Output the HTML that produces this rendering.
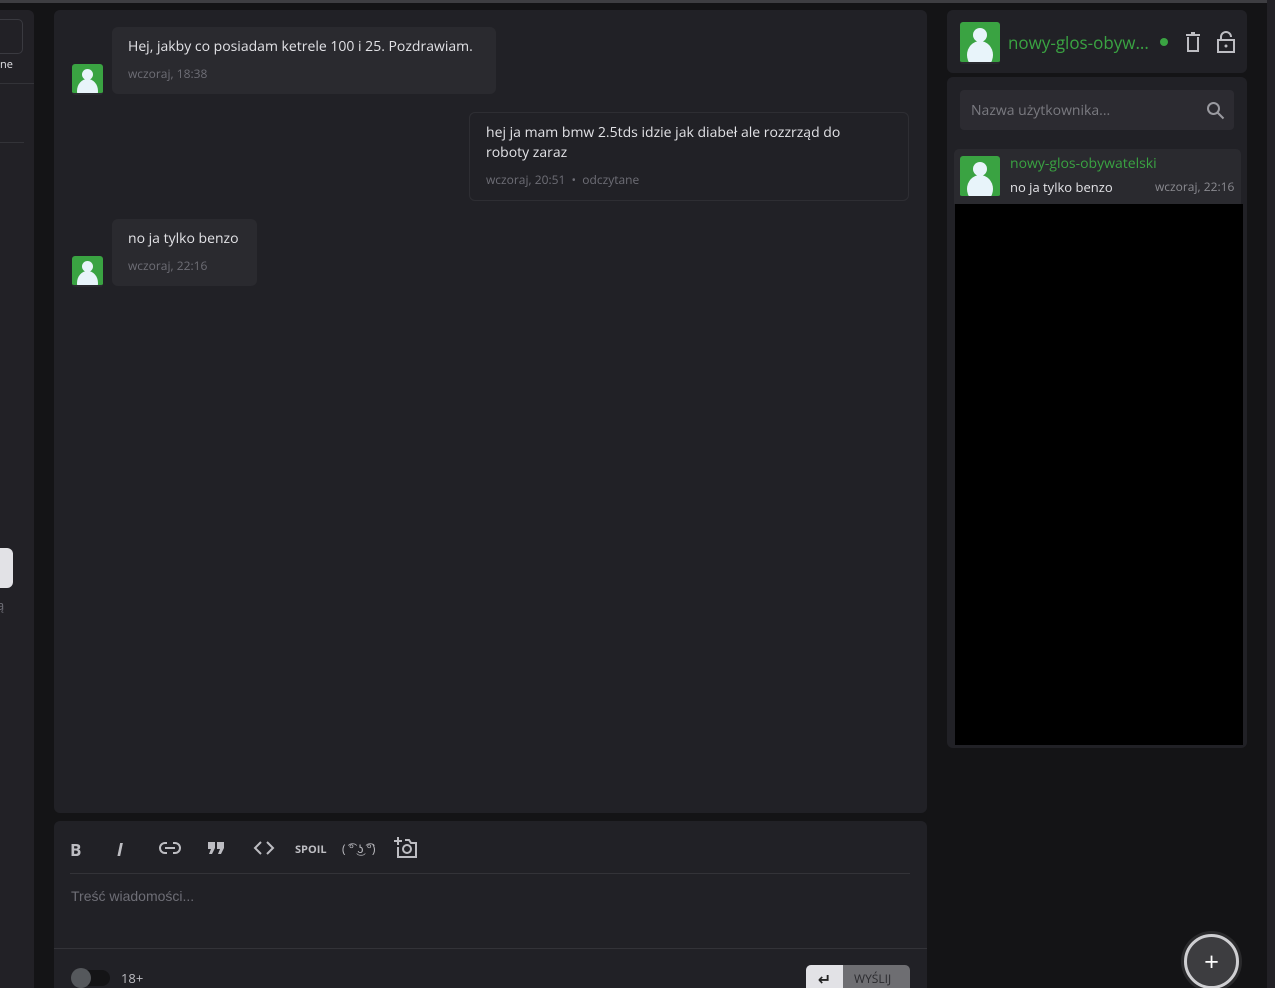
<!DOCTYPE html>
<html><head><meta charset="utf-8"><style>
*{box-sizing:border-box;margin:0;padding:0}
html{width:1275px;height:988px;overflow:hidden}
body{width:1275px;height:988px;background:#141416;position:relative;overflow:hidden;font-family:"Open Sans","Liberation Sans","DejaVu Sans",sans-serif;color:#e2e2e6}
.a{position:absolute}
.panel{background:#212126;border-radius:6px}
.av{position:absolute;width:31px;height:31px;background:#3aa342;border-radius:3px;overflow:hidden;border-bottom:2px solid #2a2a2f}
.av:before{content:"";position:absolute;left:10px;top:5px;width:11px;height:11px;border-radius:50%;background:#e8f4fa}
.av:after{content:"";position:absolute;left:5px;top:15px;width:21px;height:24px;border-radius:50%;background:#e8f4fa}
.av.b:before{left:13px;top:6px;width:14px;height:14px}
.av.b:after{left:7px;top:19px;width:26px;height:28px}
.msg{position:absolute;background:#2a2a2f;border-radius:6px;font-size:14px;color:#e2e2e6}
.t{font-size:12px;color:#6e6e76}
.tb{position:absolute;top:838px;color:#bdbdc2;font-weight:bold}
</style></head><body>
<div class="a" style="left:0;top:0;width:1275px;height:3px;background:#3e3e42"></div>
<div class="a" style="left:-6px;top:10px;width:40px;height:990px;background:#222126;border-radius:6px"></div>
<div class="a" style="left:-6px;top:19px;width:29px;height:35px;border:1px solid #3a3a40;border-radius:5px"></div>
<div class="a" style="left:0;top:57px;font-size:11px;color:#e2e2e6">ne</div>
<div class="a" style="left:0;top:83px;width:34px;height:1px;background:#333338"></div>
<div class="a" style="left:0;top:142px;width:24px;height:1px;background:#333338"></div>
<div class="a" style="left:-6px;top:548px;width:19px;height:40px;background:#e2e2e6;border-radius:6px"></div>
<div class="a" style="left:-3px;top:596px;font-size:13px;color:#6e6e76">ą</div>
<div class="a panel" style="left:54px;top:10px;width:873px;height:803px"></div>
<div class="av" style="left:72px;top:64px"></div>
<div class="msg" style="left:112px;top:27px;width:384px;height:67px;padding:10px 16px">Hej, jakby co posiadam ketrele 100 i 25. Pozdrawiam.<div class="t" style="margin-top:9px">wczoraj, 18:38</div></div>
<div class="msg" style="left:469px;top:112px;width:440px;height:89px;padding:10px 50px 10px 16px;background:#212126;border:1px solid #2e2e33;line-height:20px">hej ja mam bmw 2.5tds idzie jak diabeł ale rozzrząd do roboty zaraz<div class="t" style="margin-top:7px">wczoraj, 20:51 &nbsp;•&nbsp; odczytane</div></div>
<div class="av" style="left:72px;top:256px"></div>
<div class="msg" style="left:112px;top:219px;width:145px;height:67px;padding:10px 16px">no ja tylko benzo<div class="t" style="margin-top:9px">wczoraj, 22:16</div></div>
<div class="a panel" style="left:54px;top:821px;width:873px;height:180px"></div>
<div class="tb" style="left:70px;font-size:17px">B</div>
<div class="tb" style="left:117px;font-size:18px;font-style:italic">I</div>
<svg class="a" style="left:159px;top:840px" width="22" height="16" viewBox="0 0 22 16"><path d="M8 3H6a5 5 0 0 0 0 10h2M14 3h2a5 5 0 0 1 0 10h-2M6 8h10" stroke="#bdbdc2" stroke-width="2" fill="none"/></svg>
<svg class="a" style="left:208px;top:842px" width="17" height="12" viewBox="0 0 17 12"><path d="M0 0h7v6l-3 6H1l2-5H0zM9 0h7v6l-3 6h-3l2-5H9z" fill="#bdbdc2"/></svg>
<svg class="a" style="left:253px;top:840px" width="22" height="16" viewBox="0 0 22 16"><path d="M8 2L2 8l6 6M14 2l6 6-6 6" stroke="#bdbdc2" stroke-width="2" fill="none"/></svg>
<div class="tb" style="left:295px;font-size:11px;top:842px">SPOIL</div>
<div class="tb" style="left:342px;font-size:12px;top:840px;font-weight:normal">( ͡° ͜ʖ ͡°)</div>
<svg class="a" style="left:394px;top:836px" width="24" height="22" viewBox="0 0 24 22"><path d="M4 1v8M0 5h8" stroke="#bdbdc2" stroke-width="2"/><path d="M4 11v10h18V7h-5l-2-3h-4" stroke="#bdbdc2" stroke-width="2" fill="none"/><circle cx="13" cy="13" r="4" stroke="#bdbdc2" stroke-width="2" fill="none"/></svg>
<div class="a" style="left:70px;top:873px;width:840px;height:1px;background:#333338"></div>
<div class="a" style="left:71px;top:888px;font-size:14px;color:#6e6e76;font-family:'Liberation Sans',sans-serif">Treść wiadomości...</div>
<div class="a" style="left:54px;top:948px;width:873px;height:1px;background:#333338"></div>
<div class="a" style="left:72px;top:970px;width:38px;height:16px;border-radius:8px;background:#141416"></div>
<div class="a" style="left:71px;top:968px;width:20px;height:20px;border-radius:50%;background:#55585c"></div>
<div class="a" style="left:121px;top:969px;font-size:13px;color:#bdbdc2">18+</div>
<div class="a" style="left:806px;top:965px;width:104px;height:30px;border-radius:5px;background:#6e6e72;overflow:hidden"><div style="width:37px;height:30px;background:#e2e2e6;color:#222;font-size:16px;text-align:center;padding-top:3px;font-weight:bold">↵</div><div class="a" style="left:48px;top:5px;font-size:12px;color:#2a2a2e">WYŚLIJ</div></div>
<div class="a panel" style="left:947px;top:10px;width:300px;height:63px"></div>
<div class="av b" style="left:960px;top:22px;width:40px;height:42px"></div>
<div class="a" style="left:1008px;top:31px;font-size:17px;color:#3aa342">nowy-glos-obyw...</div>
<div class="a" style="left:1160px;top:38px;width:8px;height:8px;border-radius:50%;background:#3aa342"></div>
<svg class="a" style="left:1185px;top:32px" width="16" height="20" viewBox="0 0 16 20"><path d="M1 3h14M6 1h4M3 5v14h10V5" stroke="#bdbdc2" stroke-width="2" fill="none"/></svg>
<svg class="a" style="left:1217px;top:31px" width="18" height="22" viewBox="0 0 18 22"><path d="M4 9V6a5 5 0 0 1 10 0" stroke="#bdbdc2" stroke-width="2" fill="none"/><rect x="1" y="9" width="16" height="12" stroke="#bdbdc2" stroke-width="2" fill="none"/><circle cx="9" cy="15" r="1.5" fill="#bdbdc2"/></svg>
<div class="a panel" style="left:947px;top:77px;width:300px;height:671px"></div>
<div class="a" style="left:960px;top:90px;width:274px;height:40px;background:#2c2b31;border-radius:4px"></div>
<div class="a" style="left:971px;top:101px;font-size:14px;color:#7a7a80">Nazwa użytkownika...</div>
<svg class="a" style="left:1206px;top:101px" width="19" height="19" viewBox="0 0 19 19"><circle cx="7.5" cy="7.5" r="5.5" stroke="#9a9aa0" stroke-width="2" fill="none"/><path d="M11.5 11.5l6 6" stroke="#9a9aa0" stroke-width="2"/></svg>
<div class="a" style="left:954px;top:149px;width:287px;height:55px;background:#2a2a2f;border-radius:5px 5px 0 0"></div>
<div class="av b" style="left:960px;top:156px;width:40px;height:42px"></div>
<div class="a" style="left:1010px;top:154px;font-size:14px;color:#3aa342">nowy-glos-obywatelski</div>
<div class="a" style="left:1010px;top:178px;font-size:13px;color:#e2e2e6">no ja tylko benzo</div>
<div class="a" style="left:1155px;top:178px;font-size:12px;color:#8a8a90">wczoraj, 22:16</div>
<div class="a" style="left:955px;top:204px;width:288px;height:541px;background:#000"></div>
<div class="a" style="left:1267px;top:0;width:8px;height:988px;background:#222126"></div>
<div class="a" style="left:1184px;top:934px;width:55px;height:55px;border-radius:50%;background:#3d3d40;border:3px solid #cfcfd2;box-shadow:0 0 0 3px #2a2a2c;color:#fff;font-size:26px;text-align:center;line-height:48px">+</div>
</body></html>
